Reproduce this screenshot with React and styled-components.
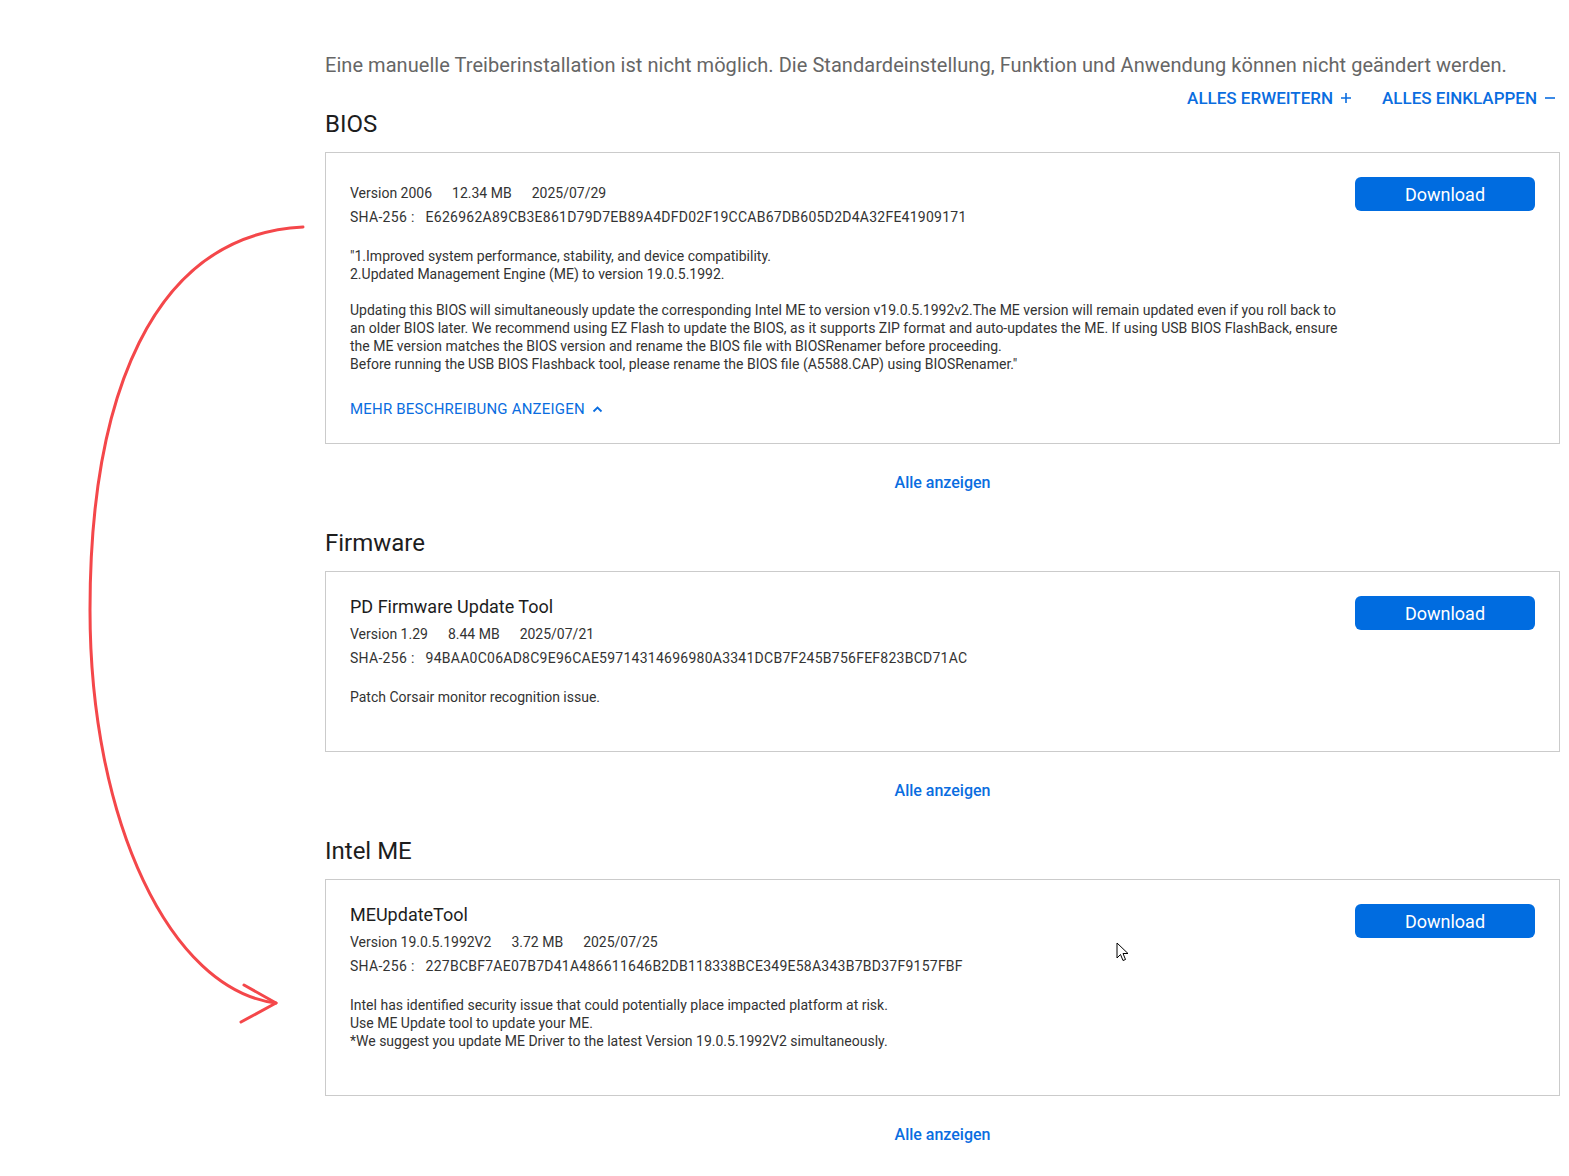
import React from "react";
import styled, { createGlobalStyle } from "styled-components";

const Global = createGlobalStyle`
  html, body { margin: 0; padding: 0; background: #fff; }
  body { font-family: Roboto, "Noto Sans", "Liberation Sans", sans-serif; color: #333; }
  * { box-sizing: border-box; }
`;

const Page = styled.div`
  position: relative;
  width: 1569px;
  min-height: 1176px;
  padding: 52px 9px 0 325px;
`;

const Intro = styled.p`
  margin: 0;
  font-size: 20px;
  line-height: 26px;
  color: #666;
  white-space: nowrap;
  letter-spacing: 0.05px;
`;

const ToolRow = styled.div`
  display: flex;
  justify-content: flex-end;
  gap: 30px;
  margin-top: 10px;
  padding-right: 4px;
`;

const ToolLink = styled.a`
  display: inline-flex;
  align-items: center;
  gap: 7px;
  font-size: 17px;
  line-height: 20px;
  font-weight: 500;
  color: #0a6de0;
  cursor: pointer;
`;

const SectionTitle = styled.h2`
  margin: ${(p) => (p.$first ? "1px" : "35px")} 0 13px;
  font-size: 24px;
  line-height: 30px;
  font-weight: 400;
  color: #1d1d1d;
`;

const Card = styled.div`
  display: flex;
  border: 1px solid #cbcbcb;
  padding: 24px 24px ${(p) => (p.$extra ? "45px" : "24px")} 24px;
`;

const Info = styled.div`
  flex: 1;
  min-width: 0;
`;

const ItemTitle = styled.div`
  font-size: 18px;
  line-height: 22px;
  color: #1d1d1d;
`;

const Meta = styled.div`
  display: flex;
  gap: 20px;
  font-size: 14px;
  line-height: 24px;
  color: #333;
  margin-top: ${(p) => (p.$first ? "4px" : "0")};
`;

const Label = styled.span`
  letter-spacing: 0.3px;
`;

const Hash = styled.span`
  margin-left: 11px;
  letter-spacing: 0.25px;
`;

const Desc = styled.div`
  margin-top: 18px;
  font-size: 14px;
  line-height: 18px;
  color: #333;
  white-space: pre-line;
`;

const MoreLink = styled.a`
  display: inline-flex;
  align-items: center;
  gap: 7px;
  margin-top: 26px;
  font-size: 15px;
  line-height: 20px;
  letter-spacing: 0.2px;
  color: #0a6de0;
  cursor: pointer;
`;

const DownloadButton = styled.button`
  flex-shrink: 0;
  width: 180px;
  height: 34px;
  border: none;
  border-radius: 6px;
  background: #006ce0;
  color: #fff;
  font-family: inherit;
  font-size: 18px;
  cursor: pointer;
`;

const ShowAll = styled.a`
  display: block;
  margin-top: 29px;
  text-align: center;
  font-size: 16px;
  line-height: 20px;
  font-weight: 500;
  color: #0a6de0;
  cursor: pointer;
`;

const Overlay = styled.svg`
  position: absolute;
  left: 0;
  top: 0;
  pointer-events: none;
`;

const Cursor = styled.svg`
  position: absolute;
  left: 1116px;
  top: 942px;
`;

const Plus = () => (
  <svg width="12" height="12" viewBox="0 0 12 12">
    <path d="M6 1v10M1 6h10" stroke="currentColor" strokeWidth="1.6" />
  </svg>
);
const Minus = () => (
  <svg width="12" height="12" viewBox="0 0 12 12">
    <path d="M1 6h10" stroke="currentColor" strokeWidth="1.6" />
  </svg>
);
const ChevronUp = () => (
  <svg width="11" height="8" viewBox="0 0 11 8">
    <path d="M1.5 6.5l4-4 4 4" stroke="currentColor" strokeWidth="1.8" fill="none" />
  </svg>
);

const sections = [
  {
    name: "BIOS",
    items: [
      {
        meta: ["Version 2006", "12.34 MB", "2025/07/29"],
        sha: "E626962A89CB3E861D79D7EB89A4DFD02F19CCAB67DB605D2D4A32FE41909171",
        desc:
          '"1.Improved system performance, stability, and device compatibility.\n2.Updated Management Engine (ME) to version 19.0.5.1992.\n\nUpdating this BIOS will simultaneously update the corresponding Intel ME to version v19.0.5.1992v2.The ME version will remain updated even if you roll back to\nan older BIOS later. We recommend using EZ Flash to update the BIOS, as it supports ZIP format and auto-updates the ME. If using USB BIOS FlashBack, ensure\nthe ME version matches the BIOS version and rename the BIOS file with BIOSRenamer before proceeding.\nBefore running the USB BIOS Flashback tool, please rename the BIOS file (A5588.CAP) using BIOSRenamer."',
        more: true,
      },
    ],
  },
  {
    name: "Firmware",
    items: [
      {
        title: "PD Firmware Update Tool",
        meta: ["Version 1.29", "8.44 MB", "2025/07/21"],
        sha: "94BAA0C06AD8C9E96CAE59714314696980A3341DCB7F245B756FEF823BCD71AC",
        desc: "Patch Corsair monitor recognition issue.",
      },
    ],
  },
  {
    name: "Intel ME",
    items: [
      {
        title: "MEUpdateTool",
        meta: ["Version 19.0.5.1992V2", "3.72 MB", "2025/07/25"],
        sha: "227BCBF7AE07B7D41A486611646B2DB118338BCE349E58A343B7BD37F9157FBF",
        desc:
          "Intel has identified security issue that could potentially place impacted platform at risk.\nUse ME Update tool to update your ME.\n*We suggest you update ME Driver to the latest Version 19.0.5.1992V2 simultaneously.",
      },
    ],
  },
];

export default function App() {
  return (
    <Page>
      <Global />
      <Intro>
        Eine manuelle Treiberinstallation ist nicht möglich. Die Standardeinstellung, Funktion und Anwendung können nicht geändert werden.
      </Intro>
      <ToolRow>
        <ToolLink>
          ALLES ERWEITERN <Plus />
        </ToolLink>
        <ToolLink>
          ALLES EINKLAPPEN <Minus />
        </ToolLink>
      </ToolRow>
      {sections.map((s, si) => (
        <section key={s.name}>
          <SectionTitle $first={si === 0}>{s.name}</SectionTitle>
          {s.items.map((it) => (
            <Card key={it.sha} $extra={!it.more}>
              <Info>
                {it.title && <ItemTitle>{it.title}</ItemTitle>}
                <Meta $first>
                  {it.meta.map((m) => (
                    <span key={m}>{m}</span>
                  ))}
                </Meta>
                <Meta>
                  <span>
                    <Label>SHA-256 :</Label>
                    <Hash>{it.sha}</Hash>
                  </span>
                </Meta>
                <Desc>{it.desc}</Desc>
                {it.more && (
                  <MoreLink>
                    MEHR BESCHREIBUNG ANZEIGEN <ChevronUp />
                  </MoreLink>
                )}
              </Info>
              <DownloadButton>Download</DownloadButton>
            </Card>
          ))}
          <ShowAll>Alle anzeigen</ShowAll>
        </section>
      ))}
      <Overlay width="1569" height="1176" viewBox="0 0 1569 1176">
        <path
          d="M303 227 C150 235 90 400 90 610 C90 820 170 990 276 1003"
          fill="none"
          stroke="#f4474a"
          strokeWidth="3"
          strokeLinecap="round"
        />
        <path
          d="M244 985 L276 1003 L241 1022"
          fill="none"
          stroke="#f4474a"
          strokeWidth="3"
          strokeLinecap="round"
          strokeLinejoin="round"
        />
      </Overlay>
      <Cursor width="14" height="21" viewBox="0 0 14 21">
        <path d="M1 1 L1 16 L4.5 12.5 L7 18.5 L9.5 17.5 L7 11.5 L12 11.5 Z" fill="#fff" stroke="#000" strokeWidth="1" strokeLinejoin="round" />
      </Cursor>
    </Page>
  );
}
